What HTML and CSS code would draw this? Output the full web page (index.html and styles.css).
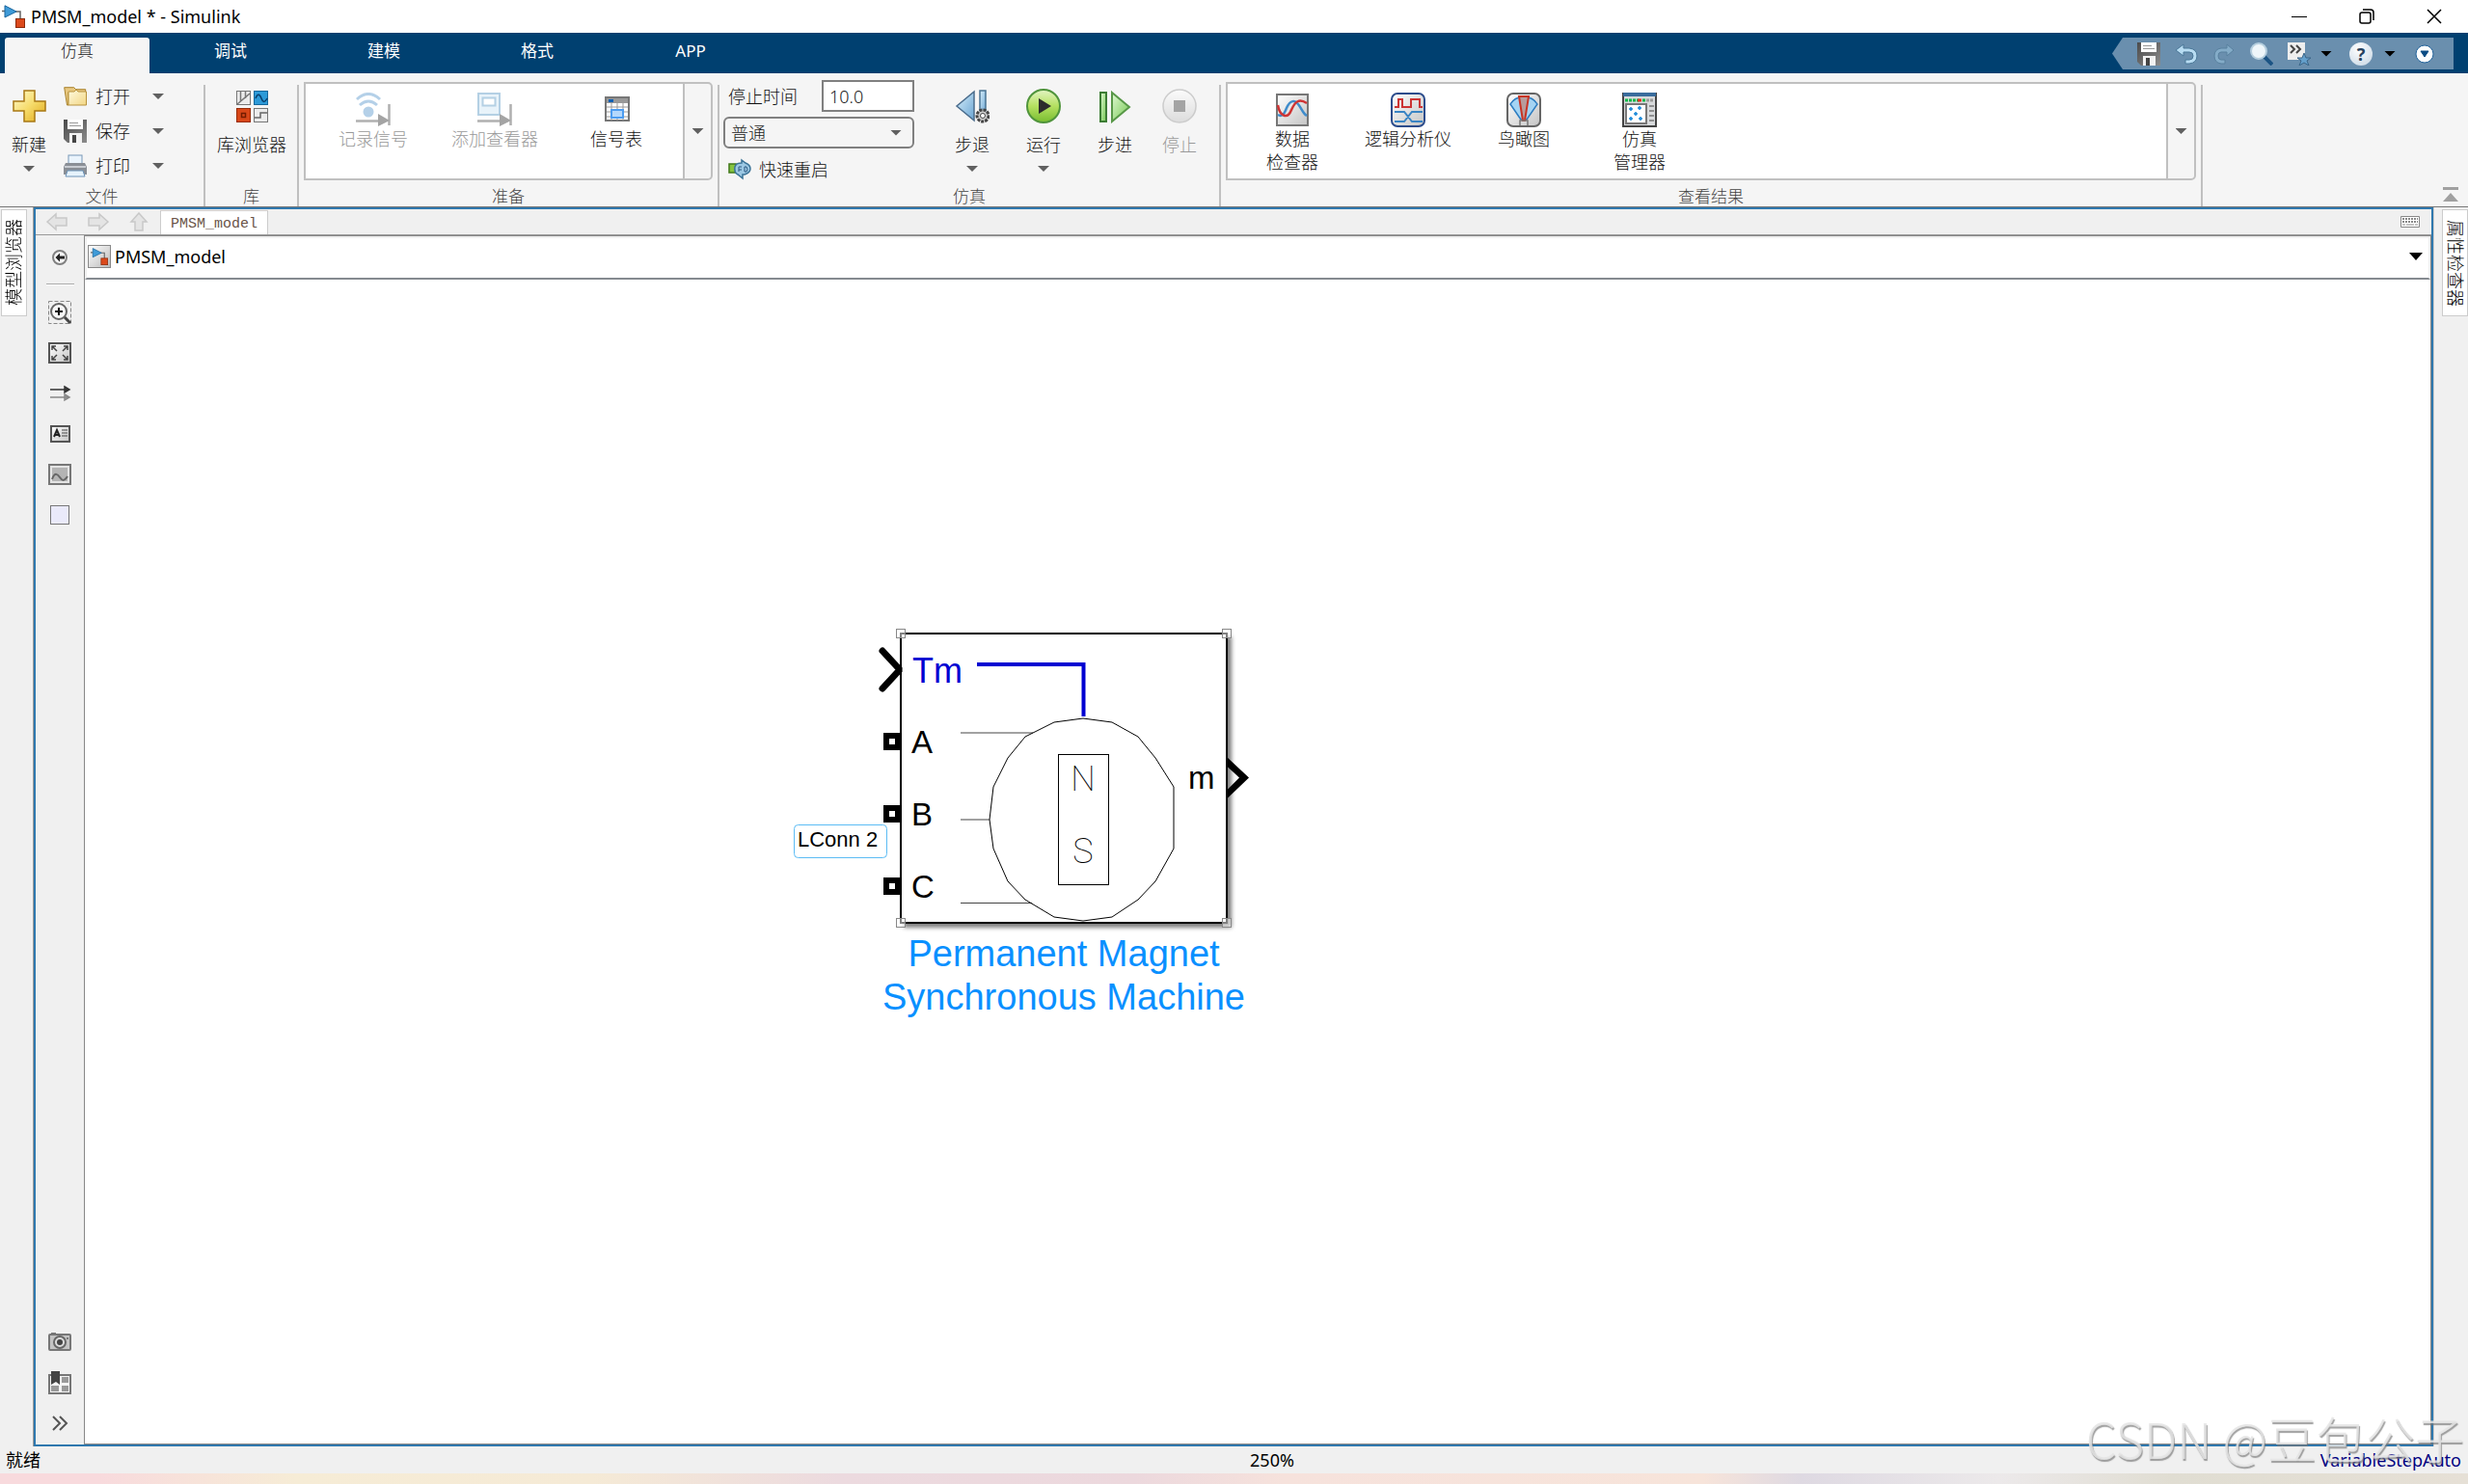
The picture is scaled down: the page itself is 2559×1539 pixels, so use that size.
FILE: index.html
```html
<!DOCTYPE html>
<html lang="zh-CN">
<head>
<meta charset="utf-8">
<title>PMSM_model * - Simulink</title>
<link rel="stylesheet" href="styles.css">
</head>
<body>
<svg class="defs" aria-hidden="true">
  <defs>
    <linearGradient id="g-gold" x1="0" y1="0" x2="1" y2="1"><stop offset="0" stop-color="#fffbd0"/><stop offset=".5" stop-color="#f6dc6c"/><stop offset="1" stop-color="#e0a818"/></linearGradient>
    <linearGradient id="g-paper" x1="0" y1="0" x2="1" y2="1"><stop offset="0" stop-color="#fffbe0"/><stop offset="1" stop-color="#f2d684"/></linearGradient>
    <linearGradient id="g-blue" x1="0" y1="0" x2="1" y2="1"><stop offset="0" stop-color="#d8effb"/><stop offset="1" stop-color="#6aa5d3"/></linearGradient>
    <linearGradient id="g-green" x1="0" y1="0" x2="1" y2="1"><stop offset="0" stop-color="#e0f8d4"/><stop offset="1" stop-color="#74c850"/></linearGradient>
    <linearGradient id="g-run" x1="0" y1="0" x2="0" y2="1"><stop offset="0" stop-color="#e4f5c4"/><stop offset=".5" stop-color="#b4e060"/><stop offset="1" stop-color="#78bc30"/></linearGradient>
    <linearGradient id="g-gray" x1="0" y1="0" x2="1" y2="1"><stop offset="0" stop-color="#ffffff"/><stop offset="1" stop-color="#c4c4c4"/></linearGradient>
    <linearGradient id="g-disk" x1="0" y1="0" x2="1" y2="1"><stop offset="0" stop-color="#4a4a4a"/><stop offset="1" stop-color="#8c8c8c"/></linearGradient>
    <linearGradient id="g-fade" x1="0" y1="0" x2="0" y2="1"><stop offset="0" stop-color="#fbfbfb"/><stop offset="1" stop-color="#dcdcdc"/></linearGradient>
  </defs>
  <symbol id="i-model" viewBox="0 0 24 24"><path d="M0 6.500H3M14 7h5v8" fill="none" stroke="#666" stroke-width="1.500"/><path d="M3 .8L15 7 3 13z" fill="#3f9bd8" stroke="#1a659c"/><rect x="14.500" y="14.500" width="9" height="9" fill="#dc4a1c" stroke="#8c2a0a"/></symbol>
  <symbol id="i-new" viewBox="0 0 36 36"><path d="M13 2h11v11h11v10H24v11H13V23H2V13h11z" fill="url(#g-gold)" stroke="#a87814" stroke-width="1.500"/></symbol>
  <symbol id="i-open" viewBox="0 0 24 24"><path d="M.7 2.700h10l2 2h10V8H5v13H3.500z" fill="#e8c880" stroke="#a8822c"/><path d="M5 21V7h6l2-2 2 2h8.500v14z" fill="url(#g-paper)" stroke="#b8923c"/></symbol>
  <symbol id="i-save" viewBox="0 0 24 24"><path d="M0 0h24v24H4l-4-4z" fill="url(#g-disk)"/><rect x="4" y="0" width="16" height="10" fill="#fff"/><path d="M6 3.500h9M6 6.500h12" stroke="#999"/><rect x="6" y="14" width="13" height="10" fill="#f2f2f2"/><rect x="9" y="16" width="4" height="8" fill="#444"/></symbol>
  <symbol id="i-print" viewBox="0 0 24 24"><rect x="5" y="1" width="14" height="10" fill="#eaf4fc" stroke="#7898b8"/><path d="M2 9h20l2 4v8H0v-8z" fill="#8a8f96"/><path d="M1 13h22" stroke="#c8ccd2" stroke-width="2"/><path d="M4 17h16l2 6H2z" fill="#e6f3fc" stroke="#6c93b8"/></symbol>
  <symbol id="i-library" viewBox="0 0 36 36"><rect x="2.500" y="2.500" width="14" height="14" fill="#ececec" stroke="#777"/><path d="M6.500 3v10M11.500 3v7M3 16L16 5" stroke="#777" fill="none" stroke-width="1.500"/><rect x="20.500" y="2.500" width="14" height="14" fill="#2d9ad8" stroke="#16689c"/><path d="M22 10c2-5 4-5 6 0s4 4 6 0" fill="none" stroke="#093f6c" stroke-width="1.500"/><rect x="2.500" y="20.500" width="14" height="14" fill="#d94718" stroke="#982c08"/><rect x="7.500" y="25.500" width="4" height="4" fill="none" stroke="#741c00" stroke-width="1.500"/><rect x="20.500" y="20.500" width="14" height="14" fill="#ececec" stroke="#777"/><path d="M21 30h6v-5h7" fill="none" stroke="#666" stroke-width="1.500"/></symbol>
  <symbol id="i-log" viewBox="0 0 36 36"><g fill="none" stroke="#b4d0e8" stroke-width="3"><path d="M1 7q12-11 24 0M4 13q9-8 18 0"/></g><circle cx="13" cy="20" r="5.500" fill="#b4d0e8"/><path d="M0 29.500h24M34.500 12v22" stroke="#b0b0b0" stroke-width="2.500"/><path d="M23 22l12 7-12 6z" fill="#a4a4a4"/></symbol>
  <symbol id="i-viewer" viewBox="0 0 36 36"><rect x="1" y="1" width="22" height="22" fill="#e8f3fa" stroke="#b4d0e4" stroke-width="2"/><rect x="5.500" y="5.500" width="13" height="8" fill="#fff" stroke="#b4d0e4" stroke-width="2"/><path d="M0 29.500h24M34.500 12v22" stroke="#b0b0b0" stroke-width="2.500"/><path d="M23 22l12 7-12 6z" fill="#a4a4a4"/></symbol>
  <symbol id="i-table" viewBox="0 0 36 36"><rect x="7" y="5" width="24" height="24" fill="#fff" stroke="#777" stroke-width="2"/><path d="M8 6h22v5H8z" fill="#999"/><rect x="10" y="7" width="5" height="3" fill="#0a5fb4"/><path d="M8 15h22M8 20h22M8 25h22M13 11v18M19 11v18M25 11v18" stroke="#999"/><rect x="13" y="18" width="12" height="8" fill="#b4d8fc" stroke="#4c9cf0" stroke-width="2"/></symbol>
  <symbol id="i-restart" viewBox="0 0 24 24"><rect x="1" y="6" width="7" height="9" fill="#86c440" stroke="#407818" stroke-width="1.500"/><path d="M7 9q1-4 7-4V2l4 3q5 2 5 6t-6 6h-2v4l-5-4q-4-2-3-8z" fill="#9cc8e4" stroke="#3c7498" stroke-width="1.500"/><path d="M11 14V9h3M11 12h3M17 14V9h2q2 3 0 5z" fill="none" stroke="#2c5880"/></symbol>
  <symbol id="i-back" viewBox="0 0 36 36"><path d="M20 3L2 18l18 15z" fill="url(#g-blue)" stroke="#4a6c8c" stroke-width="1.500"/><rect x="26" y="2" width="6" height="24" fill="url(#g-blue)" stroke="#4a7494" stroke-width="1.500"/><circle cx="29" cy="28" r="6" fill="#d0d0d0" stroke="#444" stroke-width="3" stroke-dasharray="3 1"/><circle cx="29" cy="28" r="2.500" fill="#fff" stroke="#444"/></symbol>
  <symbol id="i-run" viewBox="0 0 36 36"><circle cx="18" cy="18" r="17" fill="url(#g-run)" stroke="#50943c" stroke-width="2"/><path d="M13 10l13 8-13 8z" fill="#2c2c2c"/></symbol>
  <symbol id="i-step" viewBox="0 0 36 36"><rect x="3" y="4" width="6" height="30" fill="url(#g-green)" stroke="#3c7c34" stroke-width="2"/><path d="M15 4l18 15-18 15z" fill="url(#g-green)" stroke="#589848" stroke-width="2"/></symbol>
  <symbol id="i-stop" viewBox="0 0 36 36"><circle cx="18" cy="18" r="17" fill="url(#g-fade)" stroke="#ccc" stroke-width="1.500"/><rect x="12" y="12" width="12" height="12" fill="#a4a4a4"/></symbol>
  <symbol id="i-inspector" viewBox="0 0 36 36"><rect x="2" y="2" width="32" height="32" fill="url(#g-gray)" stroke="#777" stroke-width="2"/><path d="M3 23c5 3 7-2 9-7 4-9 9-8 12-4 4 5 5 10 9 12" fill="none" stroke="#3f8ccb" stroke-width="2.500"/><path d="M3 13c2 12 10 15 14 5 4-9 8-12 16-7" fill="none" stroke="#cf3434" stroke-width="2.500"/></symbol>
  <symbol id="i-logic" viewBox="0 0 36 36"><rect x="1" y="1" width="34" height="34" rx="6" fill="url(#g-gray)" stroke="#2c4c8c" stroke-width="2"/><path d="M4 15h4V7h4v8h9V7h9v8h3" fill="none" stroke="#cc3434" stroke-width="2"/><path d="M4 20h10l8 10h11M4 30h10l8-10h11" fill="none" stroke="#3984c4" stroke-width="2"/></symbol>
  <symbol id="i-bird" viewBox="0 0 36 36"><rect x="1" y="1" width="34" height="34" rx="6" fill="url(#g-gray)" stroke="#666" stroke-width="2"/><path d="M15 28L4 12q4-7 14-8 10 1 14 8L21 28z" fill="#a4d4f4" stroke="#2c7cc0" stroke-width="1.500"/><path d="M13 4h10l-4 25h-2z" fill="#b89c9c" stroke="#c83424" stroke-width="2"/><path d="M14 34v-5h8v5" fill="none" stroke="#777" stroke-width="1.500"/></symbol>
  <symbol id="i-manager" viewBox="0 0 36 36"><rect x="1" y="1" width="34" height="34" fill="#d8dadc" stroke="#444" stroke-width="2"/><path d="M1 0h34v4H1z" fill="#3a6c9c"/><path d="M3 8h16" stroke="#10b848" stroke-width="3" stroke-dasharray="3 1"/><path d="M16 8h4" stroke="#e83020" stroke-width="3"/><path d="M21 8h3" stroke="#10b848" stroke-width="3"/><path d="M25 8h8" stroke="#999" stroke-width="3" stroke-dasharray="3 1"/><rect x="4" y="12" width="21" height="20" fill="#fff" stroke="#777" stroke-width="2"/><path d="M9 15v4M7 17h4M18 14v4M16 16h4M14 20v4M12 22h4M9 25v4M7 27h4M19 25v4M17 27h4" stroke="#1486d8" stroke-width="1.500"/><path d="M28 14h5M28 19h5M28 24h5M28 29h5" stroke="#777" stroke-width="1.500"/></symbol>
  <symbol id="i-undo" viewBox="0 0 24 24"><path d="M1 8l8-6v4h6q8 1 8 8t-8 8h-4v-4h4q4 0 4-4t-4-4H9v4z" fill="#b8dcf2" stroke="#4a7898"/></symbol>
  <symbol id="i-redo" viewBox="0 0 24 24"><path d="M22 8l-7-6v4H9q-7 1-7 8t7 8h4v-4H9q-3 0-3-4t3-4h6v4z" fill="#84acc8" stroke="#58809e"/></symbol>
  <symbol id="i-search" viewBox="0 0 24 24"><path d="M14 14l9 9" stroke="#1c5484" stroke-width="4"/><circle cx="9" cy="9" r="8" fill="#eef6fa" stroke="#b4cede" stroke-width="2"/></symbol>
  <symbol id="i-fav" viewBox="0 0 24 24"><path d="M0 0h18v18H0z" fill="#eee"/><path d="M3 3l4 4-4 4M9 3l4 4-4 4" fill="none" stroke="#444" stroke-width="2"/><path d="M17 11l2 5h5l-4 3 2 5-5-3-5 3 2-5-4-3h5z" fill="#64a0cc" stroke="#3a6488"/></symbol>
  <symbol id="i-more" viewBox="0 0 24 24"><circle cx="12" cy="12" r="9" fill="#fff" stroke="#24649c"/><path d="M8 9h8l-4 6z" fill="#0c4c84" stroke="#0c4c84"/></symbol>
  <symbol id="i-left" viewBox="0 0 24 20"><path d="M2 10L11 2v4h11v8H11v4z" fill="#e4e4e4" stroke="#c8c8c8" stroke-width="1.500"/></symbol>
  <symbol id="i-right" viewBox="0 0 24 20"><path d="M22 10L13 2v4H2v8h11v4z" fill="#e4e4e4" stroke="#c8c8c8" stroke-width="1.500"/></symbol>
  <symbol id="i-up" viewBox="0 0 20 20"><path d="M10 1l8 9h-4v9H6v-9H2z" fill="#e4e4e4" stroke="#c8c8c8" stroke-width="1.500"/></symbol>
  <symbol id="i-keys" viewBox="0 0 20 12"><path d="M.5.500h19v11H.5z" fill="#fff" stroke="#888"/><path d="M2 3h16M2 6h16" stroke="#888" stroke-width="2" stroke-dasharray="2 1"/><path d="M2 9h3M6 9h8M15 9h3" stroke="#888"/></symbol>
  <symbol id="i-hide" viewBox="0 0 24 24"><circle cx="12" cy="12" r="7" fill="#f4f4f4" stroke="#808080" stroke-width="2"/><path d="M7.500 12l4.500-4.500v3h5v3h-5v3z" fill="#222"/></symbol>
  <symbol id="i-zoom" viewBox="0 0 24 24"><path d="M.5.500h23v23H.5z" fill="none" stroke="#888" stroke-dasharray="4 2"/><path d="M16 16l7 7" stroke="#444" stroke-width="3"/><circle cx="11" cy="11" r="8" fill="#f8f8f8" stroke="#666" stroke-width="2"/><path d="M11 7v8M7 11h8" stroke="#111" stroke-width="2"/></symbol>
  <symbol id="i-fit" viewBox="0 0 24 24"><rect x="1" y="2" width="22" height="20" fill="url(#g-gray)" stroke="#555" stroke-width="2"/><path d="M4 9V5h4M4 5l5 5M20 9V5h-4M20 5l-5 5M4 15v4h4M4 19l5-5M20 15v4h-4M20 19l-5-5" fill="none" stroke="#444" stroke-width="1.500"/></symbol>
  <symbol id="i-arrows" viewBox="0 0 24 24"><path d="M2 8h20M17 5l5 3-5 3z" fill="#555" stroke="#333" stroke-width="1.500"/><path d="M2 16h20M17 13l5 3-5 3z" fill="#bbb" stroke="#888" stroke-width="1.500"/></symbol>
  <symbol id="i-note" viewBox="0 0 24 24"><rect x="3" y="4" width="19" height="16" fill="url(#g-gray)" stroke="#555" stroke-width="2"/><path d="M6 15l3-7 3 7M7 13h4" fill="none" stroke="#222" stroke-width="2"/><path d="M14 8h6M14 11h6M14 14h6" stroke="#444"/></symbol>
  <symbol id="i-image" viewBox="0 0 24 24"><rect x="1" y="2" width="22" height="20" fill="#e4e4e4" stroke="#777" stroke-width="2"/><path d="M4 5h16v14H4z" fill="#b4b4b4"/><path d="M4 17c3-8 6-5 8-2s4 5 8-1" fill="none" stroke="#666" stroke-width="2"/></symbol>
  <symbol id="i-area" viewBox="0 0 24 24"><rect x="2.500" y="2.500" width="19" height="19" fill="#eaeafa" stroke="#777"/></symbol>
  <symbol id="i-camera" viewBox="0 0 24 24"><path d="M3 2h5v3H3z" fill="#777"/><rect x="1" y="4" width="22" height="16" rx="1" fill="#c4c4c4" stroke="#777" stroke-width="2"/><circle cx="12" cy="12" r="6" fill="#ddd" stroke="#666" stroke-width="2"/><circle cx="12" cy="12" r="3" fill="#444"/><path d="M19 8h2" stroke="#333"/></symbol>
  <symbol id="i-book" viewBox="0 0 24 24"><rect x="1" y="4" width="22" height="19" fill="#f4f4f4" stroke="#777" stroke-width="2"/><path d="M14 6h7v6h-7zM14 15h7v6h-7zM3 15h8v6H3z" fill="#999"/><path d="M3 0h9v14l-4-3-5 3z" fill="#444"/></symbol>
  <symbol id="i-chev" viewBox="0 0 24 24"><path d="M5 5l7 7-7 7M12 5l7 7-7 7" fill="none" stroke="#555" stroke-width="2"/></symbol>
</svg>

<header class="titlebar">
  <svg class="ic24"><use href="#i-model"/></svg>
  <span class="title">PMSM_model * - Simulink</span>
  <div class="winbtns">
    <button aria-label="最小化"><svg width="16" height="16"><path d="M0 8.500h16" stroke="#000"/></svg></button>
    <button aria-label="还原"><svg width="16" height="16" fill="none" stroke="#000" stroke-width="1.500"><rect x="1" y="4" width="11" height="11" rx="2"/><path d="M4 1h8q3 0 3 3v8"/></svg></button>
    <button aria-label="关闭"><svg width="16" height="16"><path d="M1 1l14 14M15 1L1 15" stroke="#000" stroke-width="1.500"/></svg></button>
  </div>
</header>

<nav class="tabs">
  <button class="tab active">仿真</button>
  <button class="tab">调试</button>
  <button class="tab">建模</button>
  <button class="tab">格式</button>
  <button class="tab">APP</button>
  <div class="quick">
    <button aria-label="保存"><svg class="ic24"><use href="#i-save"/></svg></button>
    <button aria-label="撤销"><svg class="ic24"><use href="#i-undo"/></svg></button>
    <button aria-label="重做"><svg class="ic24"><use href="#i-redo"/></svg></button>
    <button aria-label="搜索"><svg class="ic24"><use href="#i-search"/></svg></button>
    <button class="split" aria-label="收藏"><svg class="ic24"><use href="#i-fav"/></svg><i class="caret dark"></i></button>
    <button class="split" aria-label="帮助"><span class="help">?</span><i class="caret dark"></i></button>
    <button aria-label="更多"><svg class="ic24"><use href="#i-more"/></svg></button>
  </div>
</nav>

<section class="ribbon">
  <div class="group g-file">
    <div class="body">
      <button class="big"><svg><use href="#i-new"/></svg>新建<i class="caret"></i></button>
      <div class="rows">
        <button><svg class="ic24"><use href="#i-open"/></svg><span>打开</span><i class="caret"></i></button>
        <button><svg class="ic24"><use href="#i-save"/></svg><span>保存</span><i class="caret"></i></button>
        <button><svg class="ic24"><use href="#i-print"/></svg><span>打印</span><i class="caret"></i></button>
      </div>
    </div>
    <h2>文件</h2>
  </div>
  <div class="group g-lib">
    <div class="body"><button class="big"><svg><use href="#i-library"/></svg>库浏览器</button></div>
    <h2>库</h2>
  </div>
  <div class="group g-prep">
    <div class="body">
      <div class="gallery">
        <div class="items wide">
          <button disabled><svg><use href="#i-log"/></svg>记录信号</button>
          <button disabled><svg><use href="#i-viewer"/></svg>添加查看器</button>
          <button><svg><use href="#i-table"/></svg>信号表</button>
        </div>
        <button class="more" aria-label="展开"><i class="caret"></i></button>
      </div>
    </div>
    <h2>准备</h2>
  </div>
  <div class="group g-sim">
    <div class="body">
      <div class="controls">
        <div class="time"><label for="stop">停止时间</label><input id="stop" type="text" value="10.0"></div>
        <div class="mode"><select aria-label="仿真模式"><option>普通</option></select><i class="caret"></i></div>
        <button class="restart"><svg class="ic24"><use href="#i-restart"/></svg>快速重启</button>
      </div>
      <button class="big"><svg><use href="#i-back"/></svg>步退<i class="caret"></i></button>
      <button class="big"><svg><use href="#i-run"/></svg>运行<i class="caret"></i></button>
      <button class="big"><svg><use href="#i-step"/></svg>步进</button>
      <button class="big" disabled><svg><use href="#i-stop"/></svg>停止</button>
    </div>
    <h2>仿真</h2>
  </div>
  <div class="group g-view">
    <div class="body">
      <div class="gallery">
        <div class="items">
          <button><svg><use href="#i-inspector"/></svg>数据<br>检查器</button>
          <button><svg><use href="#i-logic"/></svg>逻辑分析仪</button>
          <button><svg><use href="#i-bird"/></svg>鸟瞰图</button>
          <button><svg><use href="#i-manager"/></svg>仿真<br>管理器</button>
        </div>
        <button class="more" aria-label="展开"><i class="caret"></i></button>
      </div>
    </div>
    <h2>查看结果</h2>
  </div>
  <div class="ribbon-end">
    <button aria-label="收起"><svg width="16" height="16" fill="#a0a0a0"><path d="M0 0h16v3H0zM8 6l8 9H0z"/></svg></button>
  </div>
</section>

<main class="workspace">
  <aside class="side left"><button>模型浏览器</button></aside>
  <div class="frame">
    <div class="doctabs">
      <button aria-label="后退"><svg width="24" height="20"><use href="#i-left"/></svg></button>
      <button aria-label="前进"><svg width="24" height="20"><use href="#i-right"/></svg></button>
      <button aria-label="向上"><svg width="20" height="20"><use href="#i-up"/></svg></button>
      <button class="doctab">PMSM_model</button>
      <button class="keys" aria-label="键盘"><svg width="20" height="12"><use href="#i-keys"/></svg></button>
    </div>
    <div class="editor">
      <div class="tools">
        <button aria-label="隐藏浏览器"><svg class="ic24"><use href="#i-hide"/></svg></button>
        <hr>
        <button aria-label="缩放"><svg class="ic24"><use href="#i-zoom"/></svg></button>
        <button aria-label="适应视图"><svg class="ic24"><use href="#i-fit"/></svg></button>
        <button aria-label="采样时间"><svg class="ic24"><use href="#i-arrows"/></svg></button>
        <button aria-label="注释"><svg class="ic24"><use href="#i-note"/></svg></button>
        <button aria-label="图像"><svg class="ic24"><use href="#i-image"/></svg></button>
        <button aria-label="区域"><svg class="ic24"><use href="#i-area"/></svg></button>
        <span class="spacer"></span>
        <button aria-label="截图"><svg class="ic24"><use href="#i-camera"/></svg></button>
        <button aria-label="书签"><svg class="ic24"><use href="#i-book"/></svg></button>
        <button aria-label="展开"><svg class="ic24"><use href="#i-chev"/></svg></button>
      </div>
      <div class="pane">
        <div class="address">
          <span class="modelbox"><svg><use href="#i-model"/></svg></span>
          <span class="path">PMSM_model</span>
          <i class="caret dark large"></i>
        </div>
        <div class="canvas">
          <svg class="block" width="500" height="430" viewBox="820 640 500 430">
            <defs><filter id="shadow" x="-10%" y="-10%" width="120%" height="120%"><feDropShadow dx="4" dy="4" stdDeviation="2" flood-color="#000" flood-opacity=".5"/></filter></defs>
            <rect x="934" y="657" width="338" height="300" fill="#fff" stroke="#000" stroke-width="2" filter="url(#shadow)"/>
            <path d="M915 675l18 19.500-18 19.500" fill="none" stroke="#000" stroke-width="7" stroke-linecap="round" stroke-linejoin="bevel"/>
            <path d="M1272 785l23 21.500-23 22v-9l13-13-13-12z" fill="#000"/>
            <g fill="#fff" stroke="#000" stroke-width="6"><rect x="919" y="763" width="12" height="12"/><rect x="919" y="838" width="12" height="12"/><rect x="919" y="913" width="12" height="12"/></g>
            <path d="M1013 689h110.500v54" fill="none" stroke="#0000d2" stroke-width="4"/>
            <g fill="none" stroke="#000">
              <path d="M996 760h75M996 850h30M996 936.500h74" stroke="#444"/>
              <path d="M1123 745l30 4 27 15 18 22 19 30v64l-19 34-18 19-27 18-30 4-30-4-30-18-18-19-15-34-4-30 4-34 15-30 18-22 30-15z"/>
              <rect x="1097.500" y="782.500" width="52" height="135"/>
            </g>
            <text class="tm" x="946" y="708">Tm</text>
            <g class="port"><text x="945" y="781">A</text><text x="945" y="856">B</text><text x="945" y="931">C</text><text x="1232" y="818">m</text></g>
            <g class="pole"><text x="1123" y="820">N</text><text x="1123" y="895">S</text></g>
            <g fill="#fff" fill-opacity=".5" stroke="#888"><rect x="929.500" y="652.500" width="9" height="9"/><rect x="1267.500" y="652.500" width="9" height="9"/><rect x="929.500" y="952.500" width="9" height="9"/><rect x="1267.500" y="952.500" width="9" height="9"/></g>
            <rect x="823.500" y="855.500" width="96" height="34" rx="4" fill="#fff" stroke="#5cbcf4"/>
            <text class="tip" x="827" y="878">LConn 2</text>
            <g class="name"><text x="1103" y="1002">Permanent Magnet</text><text x="1103" y="1047">Synchronous Machine</text></g>
          </svg>
        </div>
      </div>
    </div>
  </div>
  <aside class="side right"><button>属性检查器</button></aside>
</main>

<footer class="status">
  <span>就绪</span><span class="zoom">250%</span><a href="#solver">VariableStepAuto</a>
</footer>
<div class="desktop"></div>
<div class="watermark">CSDN @豆包公子</div>
</body>
</html>
```
FILE: styles.css
```css
* { box-sizing: border-box; }
body {
  margin: 0;
  min-height: 100vh;
  position: relative;
  display: flex;
  flex-direction: column;
  background: #f0f0f0;
  color: #111;
  font: 18px/24px "Noto Sans", "Noto Sans CJK SC", sans-serif;
}
button {
  margin: 0;
  padding: 0;
  border: 0;
  background: none;
  color: inherit;
  font: inherit;
}
svg { display: block; flex: none; }
.defs { position: absolute; width: 0; height: 0; }
.ic24 { width: 24px; height: 24px; }
.caret {
  flex: none;
  width: 12px;
  height: 6px;
  background: #606060;
  clip-path: polygon(0 0, 100% 0, 50% 100%);
}
.caret.dark { background: #000; }
.caret.large { width: 14px; height: 8px; }

.titlebar { display: flex; align-items: center; height: 34px; padding-left: 2px; background: #fff; }
.title { margin-left: 6px; color: #000; }
.winbtns { display: flex; margin-left: auto; }
.winbtns button { display: flex; width: 70px; height: 34px; align-items: center; justify-content: center; }

.tabs { display: flex; gap: 9px; height: 42px; padding: 5px 15px 0 5px; background: #004070; }
.tab { width: 150px; padding-bottom: 10px; color: #fff; font-size: 17px; }
.tab.active { border-radius: 3px 3px 0 0; background: #f5f5f5; color: #222; font-weight: 300; }
.quick {
  display: flex;
  align-items: center;
  gap: 15px;
  width: 354px;
  height: 33px;
  margin-left: auto;
  padding: 0 18px 0 26px;
  background: #6a8fae;
  clip-path: polygon(0 50%, 11px 0, 100% 0, 100% 100%, 11px 100%);
}
.quick button:last-child { margin-left: auto; }
.split { display: flex; align-items: center; gap: 10px; }
.split + .split { margin-left: 3px; gap: 12px; }
.help {
  width: 24px;
  height: 24px;
  border-radius: 12px;
  background: radial-gradient(circle at 40% 30%, #fff, #c4d4e2);
  color: #26425e;
  font-weight: 700;
}

.ribbon { display: flex; height: 139px; border-bottom: 1px solid #777; background: #f5f5f5; font-weight: 300; }
.group {
  display: flex;
  flex-direction: column;
  background: linear-gradient(#c0c0c0, #c0c0c0) right bottom / 2px calc(100% - 12px) no-repeat;
}
.group .body { display: flex; flex: 1; }
.group h2 { margin: 0; padding-right: 2px; color: #444; font-size: 17px; font-weight: 300; line-height: 21px; text-align: center; }
.g-file { width: 213px; }
.g-lib { width: 97px; }
.g-prep { width: 436px; }
.g-sim { width: 520px; }
.g-view { flex: 1; }
.g-prep .body, .g-view .body { padding: 9px 7px 0 5px; }
.big { display: flex; flex-direction: column; align-items: center; justify-content: flex-start; width: 74px; padding-top: 16px; }
.big svg { width: 36px; height: 36px; margin-bottom: 10px; }
.big .caret { margin-top: 10px; }
.g-file .big { width: 60px; }
.g-lib .big { width: 96px; }
button:disabled { color: #999; }
.rows { margin: 6px 0 0 6px; }
.rows button { display: flex; align-items: center; height: 36px; }
.rows span { width: 59px; margin-left: 9px; text-align: left; }
.gallery { display: flex; flex: 1; height: 102px; border: 2px solid #c0c0c0; border-radius: 0 5px 5px 0; }
.items { display: flex; flex: 1; padding-left: 7px; background: #fff; }
.items button { display: flex; flex-direction: column; align-items: center; justify-content: flex-start; width: 120px; padding-top: 9px; }
.items.wide button { width: 126px; }
.items svg { width: 36px; height: 36px; }
.more { display: flex; align-items: center; justify-content: center; width: 29px; border-left: 2px solid #c0c0c0; }
.controls { display: grid; grid-template-rows: repeat(3, 33px); gap: 5px; width: 198px; margin: 7px 23px 0 4px; }
.time { display: flex; align-items: center; justify-content: space-between; padding-left: 5px; }
.time input { width: 96px; height: 33px; padding: 0 6px; border: 2px solid #808080; background: #fff; color: #222; font: inherit; }
.mode { display: grid; align-items: center; }
.mode select, .mode .caret { grid-area: 1 / 1; }
.mode .caret { justify-self: end; margin-right: 13px; pointer-events: none; }
.mode select { width: 100%; height: 33px; padding: 0 6px; border: 2px solid #808080; border-radius: 6px; background: #f5f5f5; color: #222; font: inherit; appearance: none; }
.restart { display: flex; align-items: center; gap: 8px; padding-left: 5px; }
.g-sim .big:disabled { width: 60px; }
.ribbon-end { display: flex; align-items: flex-end; justify-content: flex-end; width: 275px; padding: 0 10px 4px 0; }

.workspace { display: flex; flex: 1; }
.side { flex: none; padding-top: 2px; font-weight: 300; }
.side.left { width: 35px; padding-left: 1px; border-right: 1px solid #999; }
.side.right { width: 36px; padding-left: 8px; border-left: 1px solid #ccc; }
.side button {
  width: 27px;
  height: 111px;
  border: 1px solid #ccc;
  background: #fff;
  color: #000;
  line-height: 25px;
  white-space: nowrap;
  writing-mode: vertical-rl;
  text-orientation: sideways;
}
.side.left button { transform: rotate(180deg); }
.frame { display: flex; flex: 1; flex-direction: column; border: 2px solid #2f78ae; }
.doctabs { display: flex; align-items: center; height: 27px; padding-left: 10px; border-bottom: 1px solid #999; }
.doctabs button:nth-child(2) { margin-left: 19px; }
.doctabs button:nth-child(3) { margin-left: 20px; }
.doctabs .doctab {
  align-self: flex-end;
  width: 112px;
  height: 25px;
  margin-left: 12px;
  padding-top: 3px;
  border: 1px solid #ccc;
  border-bottom: 0;
  background: #fff;
  color: #6a5448;
  font: 15px/21px "Liberation Mono", monospace;
}
.keys { margin: 0 12px 0 auto; }
.editor { display: flex; flex: 1; }
.tools { display: flex; flex-direction: column; align-items: center; gap: 18px; width: 50px; padding: 11px 0 10px; }
.tools hr { width: 29px; height: 2px; margin: -3px 0 -2px; border: 0; border-top: 1px solid #aaa; border-bottom: 1px solid #fff; }
.spacer { flex: 1; }
.pane { display: flex; flex: 1; flex-direction: column; border: 1px solid #888; background: #fff; }
.address { display: flex; align-items: center; height: 45px; padding: 0 6px 3px 1px; border: 2px solid #f0f0f0; border-bottom: 2px solid #858a90; color: #000; }
.modelbox { display: flex; align-items: center; justify-content: center; width: 24px; height: 24px; border: 1px solid #888; background: linear-gradient(135deg, #fff, #bbb); }
.modelbox svg { width: 18px; height: 18px; }
.path { margin-left: 4px; }
.address .caret { margin-left: auto; }
.canvas { position: relative; flex: 1; overflow: hidden; }
.block { position: absolute; left: 732px; top: 350px; font-family: "Liberation Sans", Arial, sans-serif; }
.tm { fill: #0000d2; font-size: 36px; }
.port { font-size: 33px; }
.pole { font-family: Roboto, Lato, sans-serif; font-size: 36px; font-weight: 100; text-anchor: middle; }
.tip { font-size: 22px; }
.name { fill: #0a90ff; font-size: 38px; text-anchor: middle; }

.status { display: grid; grid-template-columns: 1fr auto 1fr; align-items: center; height: 28px; padding: 0 7px 0 6px; color: #000; }
.status .zoom { padding-left: 80px; }
.status a { color: #000080; text-align: right; text-decoration: none; }
.desktop { height: 11px; background: linear-gradient(90deg, #f8dadd 0, #f8dadd 4%, #f6ecd6 12%, #f5ead6 24%, #ecdadf 34%, #ecd8dd 46%, #f6e2dc 52%, #f7e4da 69%, #ded9e2 73%, #ece9ea 81%, #e0ddd2 88%, #e6e0d6 100%); }
.watermark {
  position: absolute;
  right: 4px;
  bottom: 12px;
  color: rgb(228 228 228 / 85%);
  font: 300 51px/72px "Noto Sans CJK SC", sans-serif;
  text-shadow: 1px 2px 1px rgb(120 120 120 / 70%);
  pointer-events: none;
}
```
